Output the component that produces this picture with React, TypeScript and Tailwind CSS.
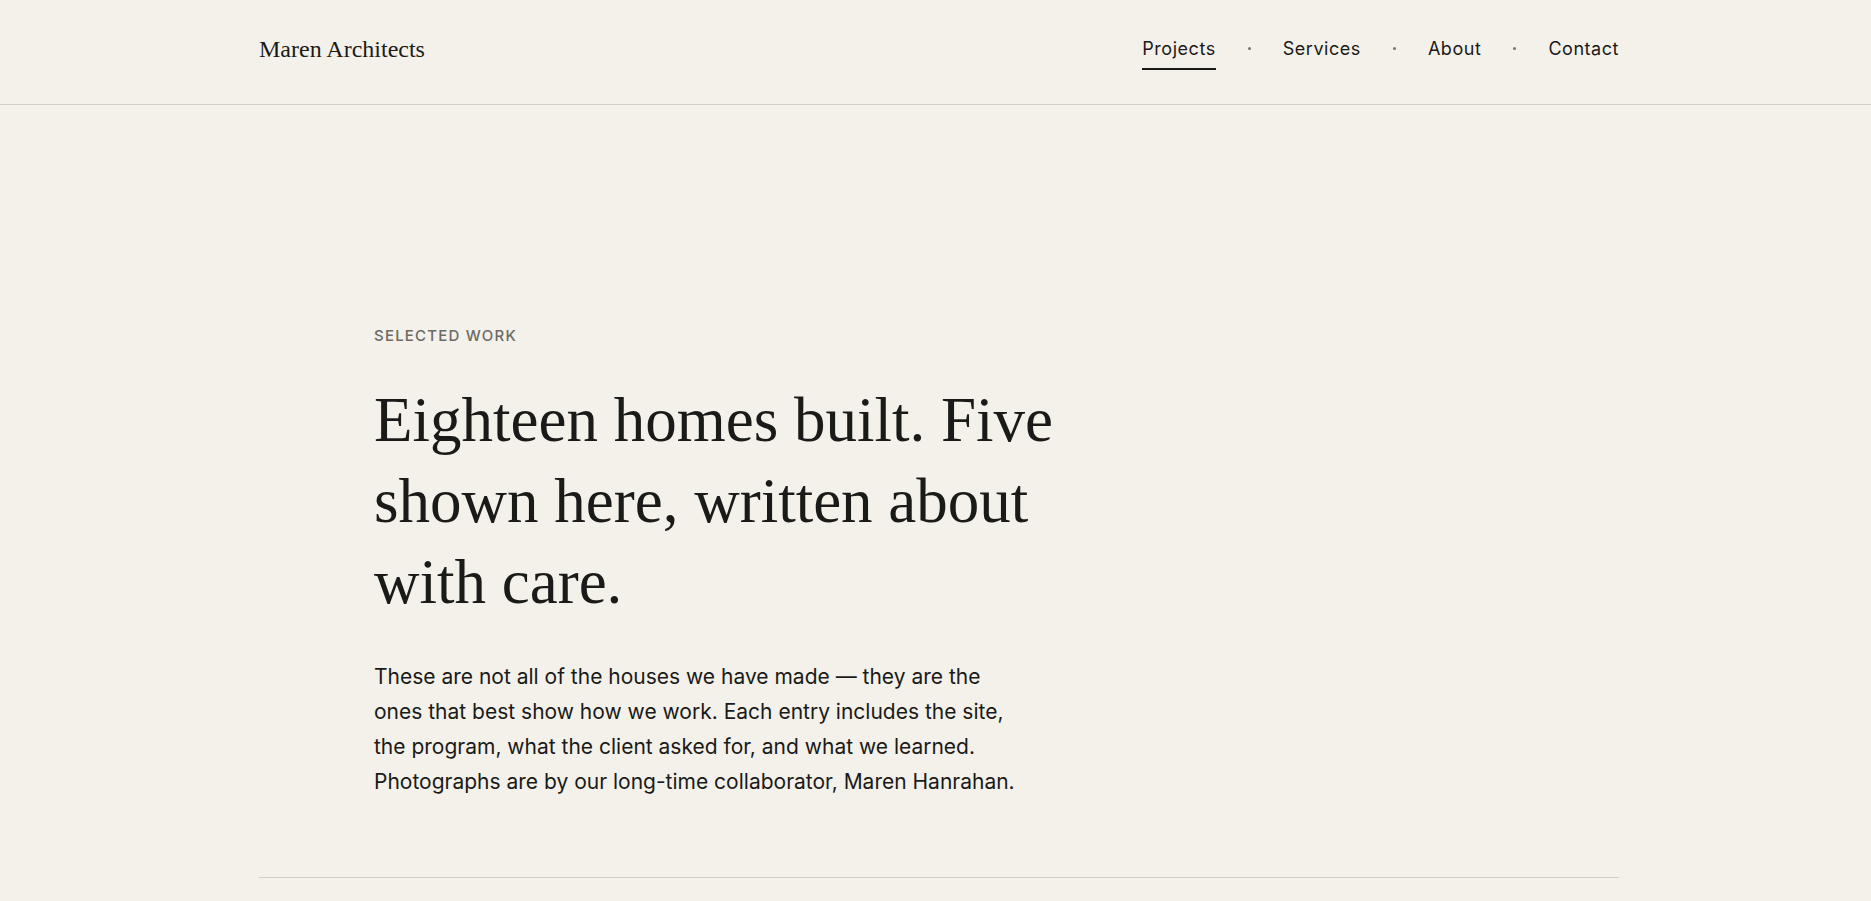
import { Fragment } from "react";

const links = ["Projects", "Services", "About", "Contact"];

export default function App() {
  return (
    <div className="min-h-screen bg-[#f4f1ea] font-['Inter',sans-serif] text-[#1a1a18]">
      <header className="border-b border-[#d2cfc8] pl-[7px]">
        <div className="mx-auto flex h-[104px] max-w-[1360px] items-start justify-between pt-[33px]">
          <a href="#home" className="font-['Liberation_Serif',serif] text-[24px] leading-8 whitespace-nowrap">
            Maren Architects
          </a>
          <nav aria-label="Main" className="flex items-start">
            {links.map((label, i) => (
              <Fragment key={label}>
                {i > 0 && (
                  <span aria-hidden="true" className="mx-8 mt-[14px] size-[3px] rounded-full bg-[#77756f]" />
                )}
                <a
                  href={`#${label.toLowerCase()}`}
                  aria-current={i === 0 ? "page" : undefined}
                  className={
                    i === 0
                      ? "border-b-2 border-[#1a1a18] pb-[3px] text-[18px] leading-8 tracking-[0.03em]"
                      : "pb-[3px] text-[18px] leading-8 tracking-[0.03em]"
                  }
                >
                  {label}
                </a>
              </Fragment>
            ))}
          </nav>
        </div>
      </header>
      <main className="pl-[7px]">
        <section className="mx-auto max-w-[1360px] border-b border-[#d2cfc8] pt-[219px] pb-[78px] pl-[115px]">
          <p className="text-[15px] leading-6 font-medium tracking-[0.08em] text-[#6b6a64] uppercase">Selected work</p>
          <h1 className="mt-8 max-w-[700px] font-['Liberation_Serif',serif] text-[63px] leading-[81px]">
            Eighteen homes built. Five shown here, written about with care.
          </h1>
          <p className="mt-9 max-w-[652px] text-[21px] leading-[35px]">
            These are not all of the houses we have made — they are the ones that best show how we work. Each entry
            includes the site, the program, what the client asked for, and what we learned. Photographs are by our
            long-time collaborator, Maren Hanrahan.
          </p>
        </section>
      </main>
    </div>
  );
}
